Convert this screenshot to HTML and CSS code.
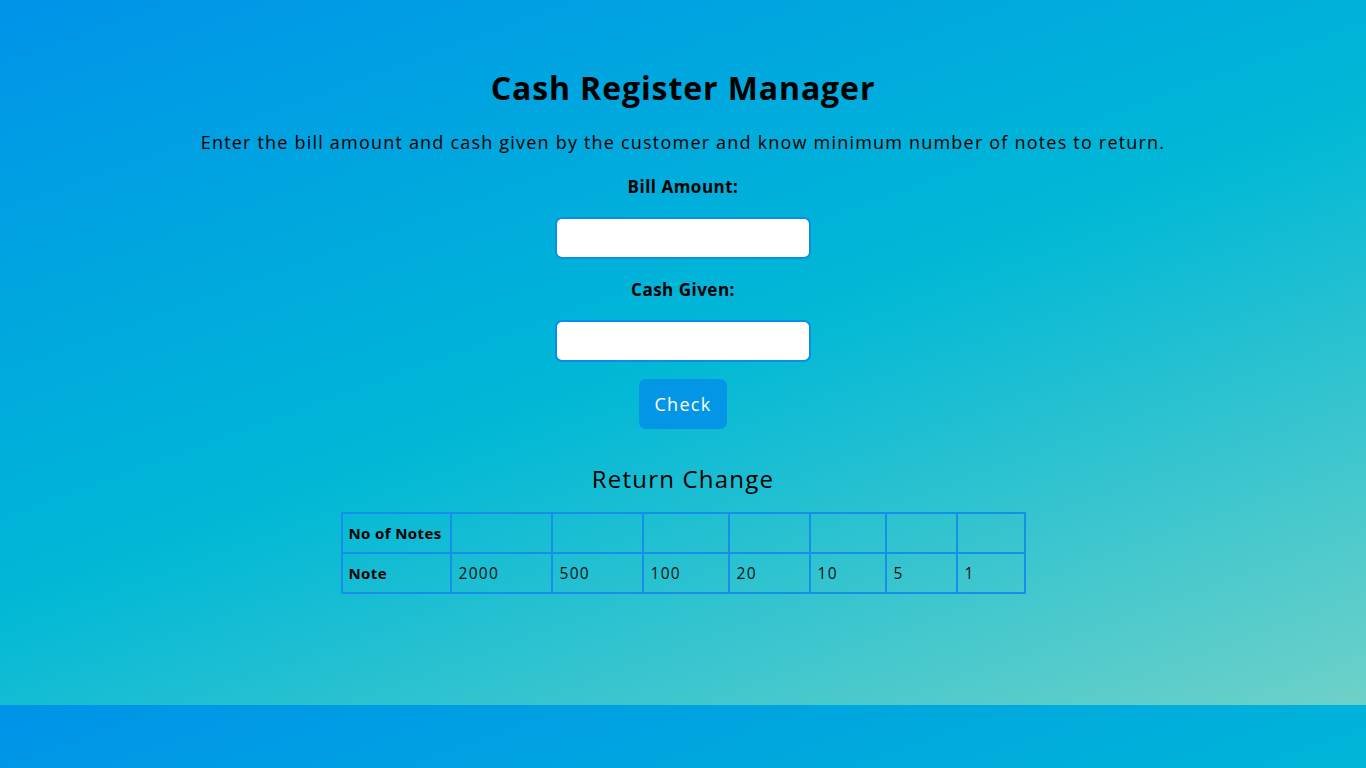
FILE: index.html
```html
<!DOCTYPE html>
<html lang="en">
<head>
<meta charset="utf-8">
<title>Cash Register Manager</title>
<link rel="stylesheet" href="styles.css">
</head>
<body>
<main class="app">
  <h1 class="title">Cash Register Manager</h1>
  <p class="intro">Enter the bill amount and cash given by the customer and know minimum number of notes to return.</p>
  <label class="field-label" for="bill">Bill Amount:</label>
  <input class="field-input" id="bill" type="number">
  <label class="field-label" for="cash">Cash Given:</label>
  <input class="field-input" id="cash" type="number">
  <button class="check-btn" type="button">Check</button>
  <h2 class="subtitle">Return Change</h2>
  <table class="change-table">
    <tbody>
      <tr>
        <th class="row-head">No of Notes</th>
        <td></td><td></td><td></td><td></td><td></td><td></td><td></td>
      </tr>
      <tr>
        <th class="row-head">Note</th>
        <td>2000</td><td>500</td><td>100</td><td>20</td><td>10</td><td>5</td><td>1</td>
      </tr>
    </tbody>
  </table>
</main>
</body>
</html>
```
FILE: styles.css
```css
body {
  margin: 0;
  font-family: "Open Sans", "DejaVu Sans", sans-serif;
  color: #000;
  background-image: linear-gradient(160deg, #0093e9 0%, #00b8d6 50%, #6ed1c8 100%);
}
.app {
  display: flex;
  flex-direction: column;
  align-items: center;
  padding: 64px 0 111px;
}
.title {
  margin: 0;
  font-size: 32px;
  line-height: 48px;
  font-weight: 700;
  letter-spacing: 0.9px;
}
.intro {
  margin: 16px 0 0;
  font-size: 18px;
  line-height: 28px;
  font-weight: 400;
  letter-spacing: 1.2px;
}
.field-label {
  margin-top: 17px;
  font-size: 17px;
  line-height: 28px;
  font-weight: 700;
  letter-spacing: 0.5px;
}
.field-input {
  box-sizing: border-box;
  margin-top: 16px;
  width: 256px;
  height: 42px;
  border: 2px solid #0a8fe6;
  border-radius: 7px;
  background: #fff;
  font: inherit;
  padding: 0 10px;
}
.check-btn {
  margin-top: 17px;
  width: 88px;
  height: 50px;
  border: none;
  border-radius: 7px;
  background: #0396e6;
  color: #fff;
  font-family: inherit;
  font-size: 18px;
  letter-spacing: 1.3px;
}
.subtitle {
  margin: 32px 0 0;
  font-size: 24px;
  line-height: 36px;
  font-weight: 400;
  letter-spacing: 1.2px;
}
.change-table {
  margin-top: 15px;
  width: 50%;
  table-layout: fixed;
  border-collapse: collapse;
  font-size: 15px;
  letter-spacing: 0.4px;
}
.change-table th,
.change-table td {
  border: 2px solid #1590ea;
  height: 38px;
  padding: 0 6px;
  text-align: left;
  font-weight: 400;
  color: #111;
}
.change-table td {
  padding-left: 7px;
  font-size: 15.5px;
  letter-spacing: 1.3px;
}
.change-table .row-head {
  width: 95px;
  font-weight: 700;
  color: #000;
}
.change-table td:nth-child(2) { width: 86px; }
.change-table td:nth-child(3) { width: 76px; }
.change-table td:nth-child(4) { width: 71px; }
.change-table td:nth-child(5) { width: 66px; }
.change-table td:nth-child(6) { width: 61px; }
.change-table td:nth-child(7) { width: 56px; }
.change-table td:nth-child(8) { width: 53px; }
```
